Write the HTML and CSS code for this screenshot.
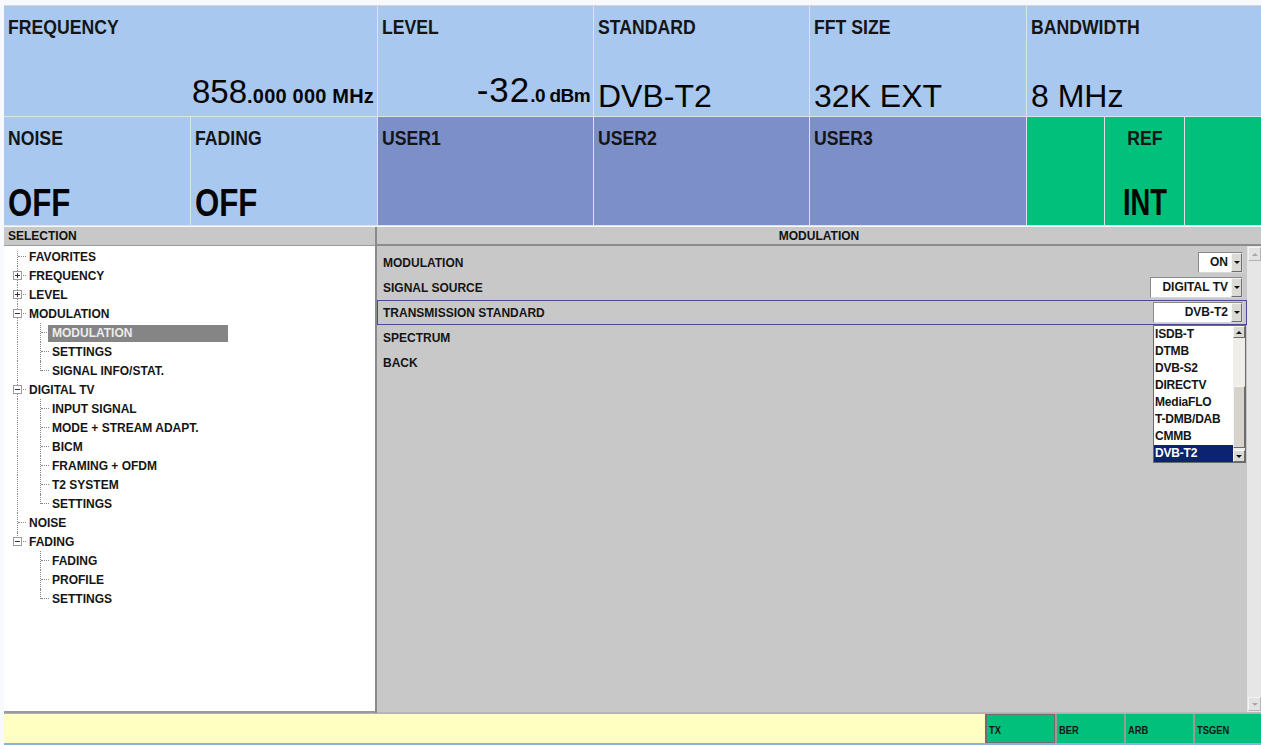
FILE: index.html
```html
<!DOCTYPE html>
<html lang="en">
<head>
<meta charset="utf-8">
<title>DVB-T2 Signal Generator</title>
<link rel="stylesheet" href="styles.css">
</head>
<body>
<div class="screen">

  <!-- status panel: two rows of parameter tiles -->
  <div class="status">
    <div class="tile blue span2">
      <span class="lbl">FREQUENCY</span>
      <span class="val right"><span class="num">858</span><span class="unit">.000 000 MHz</span></span>
    </div>
    <div class="tile blue">
      <span class="lbl">LEVEL</span>
      <span class="val right"><span class="num lvl">-32</span><span class="unit tight">.0 dBm</span></span>
    </div>
    <div class="tile blue">
      <span class="lbl">STANDARD</span>
      <span class="val">DVB-T2</span>
    </div>
    <div class="tile blue">
      <span class="lbl">FFT SIZE</span>
      <span class="val">32K EXT</span>
    </div>
    <div class="tile blue span3">
      <span class="lbl">BANDWIDTH</span>
      <span class="val">8 MHz</span>
    </div>

    <div class="tile blue">
      <span class="lbl">NOISE</span>
      <span class="val state">OFF</span>
    </div>
    <div class="tile blue">
      <span class="lbl">FADING</span>
      <span class="val state">OFF</span>
    </div>
    <div class="tile user"><span class="lbl">USER1</span></div>
    <div class="tile user"><span class="lbl">USER2</span></div>
    <div class="tile user"><span class="lbl">USER3</span></div>
    <div class="tile green"></div>
    <div class="tile green centered">
      <span class="lbl">REF</span>
      <span class="val state ref">INT</span>
    </div>
    <div class="tile green"></div>
  </div>

  <!-- working area: navigation tree and parameter menu -->
  <div class="work">
    <section class="selection">
      <div class="pane-head">SELECTION</div>
      <div class="tree">
        <div class="node"><span class="g tee first"></span><span class="txt">FAVORITES</span></div>
        <div class="node"><span class="g tee"><i class="box plus"></i></span><span class="txt">FREQUENCY</span></div>
        <div class="node"><span class="g tee"><i class="box plus"></i></span><span class="txt">LEVEL</span></div>
        <div class="node"><span class="g tee"><i class="box minus"></i></span><span class="txt">MODULATION</span></div>
        <div class="node"><span class="g pipe"></span><span class="g tee"></span><span class="txt selected">MODULATION</span></div>
        <div class="node"><span class="g pipe"></span><span class="g tee"></span><span class="txt">SETTINGS</span></div>
        <div class="node"><span class="g pipe"></span><span class="g end"></span><span class="txt">SIGNAL INFO/STAT.</span></div>
        <div class="node"><span class="g tee"><i class="box minus"></i></span><span class="txt">DIGITAL TV</span></div>
        <div class="node"><span class="g pipe"></span><span class="g tee"></span><span class="txt">INPUT SIGNAL</span></div>
        <div class="node"><span class="g pipe"></span><span class="g tee"></span><span class="txt">MODE + STREAM ADAPT.</span></div>
        <div class="node"><span class="g pipe"></span><span class="g tee"></span><span class="txt">BICM</span></div>
        <div class="node"><span class="g pipe"></span><span class="g tee"></span><span class="txt">FRAMING + OFDM</span></div>
        <div class="node"><span class="g pipe"></span><span class="g tee"></span><span class="txt">T2 SYSTEM</span></div>
        <div class="node"><span class="g pipe"></span><span class="g end"></span><span class="txt">SETTINGS</span></div>
        <div class="node"><span class="g tee"></span><span class="txt">NOISE</span></div>
        <div class="node"><span class="g end"><i class="box minus"></i></span><span class="txt">FADING</span></div>
        <div class="node"><span class="g"></span><span class="g tee"></span><span class="txt">FADING</span></div>
        <div class="node"><span class="g"></span><span class="g tee"></span><span class="txt">PROFILE</span></div>
        <div class="node"><span class="g"></span><span class="g end"></span><span class="txt">SETTINGS</span></div>
      </div>
    </section>

    <section class="menu">
      <div class="pane-head center">MODULATION</div>
      <div class="menu-body">
        <div class="rows">
          <div class="row">
            <span class="row-lbl">MODULATION</span>
            <span class="combo w-on"><span class="combo-txt">ON</span><span class="combo-btn"><i class="tri down"></i></span></span>
          </div>
          <div class="row">
            <span class="row-lbl">SIGNAL SOURCE</span>
            <span class="combo w-src"><span class="combo-txt">DIGITAL TV</span><span class="combo-btn"><i class="tri down"></i></span></span>
          </div>
          <div class="row focus">
            <span class="row-lbl">TRANSMISSION STANDARD</span>
            <span class="combo w-std open"><span class="combo-txt">DVB-T2</span><span class="combo-btn"><i class="tri down"></i></span>
              <span class="listbox">
                <span class="items">
                  <span class="item">ISDB-T</span>
                  <span class="item">DTMB</span>
                  <span class="item">DVB-S2</span>
                  <span class="item">DIRECTV</span>
                  <span class="item">MediaFLO</span>
                  <span class="item">T-DMB/DAB</span>
                  <span class="item">CMMB</span>
                  <span class="item current">DVB-T2</span>
                </span>
                <span class="lscroll">
                  <span class="sbtn"><i class="tri up"></i></span>
                  <span class="track"><span class="thumb"></span></span>
                  <span class="sbtn"><i class="tri down"></i></span>
                </span>
              </span>
            </span>
          </div>
          <div class="row"><span class="row-lbl">SPECTRUM</span></div>
          <div class="row"><span class="row-lbl">BACK</span></div>
        </div>
        <div class="vscroll">
          <span class="sbtn faint"><i class="tri up"></i></span>
          <span class="vtrack"></span>
          <span class="sbtn faint"><i class="tri down"></i></span>
        </div>
      </div>
    </section>
  </div>

  <!-- footer: message line and instrument mode tabs -->
  <div class="footer">
    <div class="msg"></div>
    <div class="tab active w-tx"><span class="tab-txt">TX</span></div>
    <div class="tab w-ber"><span class="tab-txt">BER</span></div>
    <div class="tab w-arb"><span class="tab-txt">ARB</span></div>
    <div class="tab w-tsgen"><span class="tab-txt">TSGEN</span></div>
  </div>
</div>
</body>
</html>
```

FILE: styles.css
```css
* { box-sizing: border-box; }

html, body {
  margin: 0;
  padding: 0;
  background: #ffffff;
}

body {
  font-family: "Liberation Sans", Arial, sans-serif;
  color: #111;
}

.screen {
  width: 1261px;
  height: 745px;
  padding: 5px 0 0 4px;
  display: flex;
  flex-direction: column;
  overflow: hidden;
  background: #f7f9fc;
}

/* ---------- status tiles ---------- */
.status {
  display: grid;
  grid-template-columns: 186px 186px 215px 215px 216px 77px 79px 1fr;
  grid-template-rows: 110px 108px;
  gap: 1px;
  background: #dfe2e8;
  border-top: 1px solid #d4d8de;
  border-bottom: 1px solid #dfe2e8;
}

.tile {
  display: flex;
  flex-direction: column;
  justify-content: space-between;
  align-items: flex-start;
  padding: 9px 4px 3px 4px;
  overflow: hidden;
}

.span2 { grid-column: span 2; }
.span3 { grid-column: span 3; }

.blue  { background: #a9c8f0; }
.user  { background: #7c8fc8; }
.green { background: #00c07c; }

/* condensed heading face: bold Sans squeezed horizontally */
.lbl {
  display: inline-block;
  font-weight: bold;
  font-size: 21px;
  line-height: 24px;
  color: #151515;
  transform: scaleX(0.84);
  transform-origin: left center;
  white-space: nowrap;
}

.val {
  font-size: 32px;
  line-height: 34px;
  color: #050505;
  white-space: nowrap;
}

.val.right {
  align-self: stretch;
  text-align: right;
  margin-right: -1px;
}

.num { font-size: 33px; }
.num.lvl { font-size: 35px; letter-spacing: 1px; }

.unit {
  font-size: 20px;
  font-weight: bold;
  letter-spacing: 0.2px;
}

.unit.tight {
  font-size: 19px;
  letter-spacing: -0.6px;
}

.val.state {
  display: inline-block;
  font-weight: bold;
  font-size: 38px;
  line-height: 38px;
  transform: scaleX(0.82);
  transform-origin: left center;
}

.centered { align-items: center; }
.centered .lbl,
.centered .val.state { transform-origin: center center; }
.val.state.ref { font-size: 36px; transform: scaleX(0.76); }

/* ---------- work area ---------- */
.work {
  display: grid;
  grid-template-columns: 373px 1fr;
  height: 486px;
  margin-top: 1px;
}

.pane-head {
  height: 19px;
  background: #c8c8c8;
  border-bottom: 1px solid #9a9a9a;
  font-size: 12px;
  font-weight: bold;
  line-height: 18px;
  padding-left: 4px;
  color: #111;
}

.pane-head.center {
  text-align: center;
  padding-left: 0;
  border-bottom: 2px solid #8c8c8c;
}

.selection {
  display: flex;
  flex-direction: column;
  border-right: 2px solid #8a8a8a;
}

.tree {
  flex: 1;
  background: #ffffff;
  padding: 1px 0 0 1px;
  border-bottom: 2px solid #9a9a9a;
}

.node {
  display: flex;
  align-items: center;
  height: 19px;
  font-size: 12px;
  font-weight: bold;
  color: #151515;
  white-space: nowrap;
}

.g {
  position: relative;
  flex: 0 0 23px;
  height: 19px;
}

.g.pipe::before,
.g.tee::before,
.g.end::before {
  content: "";
  position: absolute;
  left: 12px;
  top: 0;
  bottom: 0;
  border-left: 1px dotted #8a8a8a;
}

.g.first::before { top: 4px; }
.g.end::before { bottom: 9px; }

.g.tee::after,
.g.end::after {
  content: "";
  position: absolute;
  left: 13px;
  width: 8px;
  top: 9px;
  border-top: 1px dotted #8a8a8a;
}

.box {
  position: absolute;
  left: 8px;
  top: 5px;
  width: 9px;
  height: 9px;
  background: #ffffff;
  border: 1px solid #9c9c9c;
  z-index: 1;
}

.box::before {
  content: "";
  position: absolute;
  left: 1px;
  top: 3px;
  width: 5px;
  height: 1px;
  background: #333;
}

.box.plus::after {
  content: "";
  position: absolute;
  left: 3px;
  top: 1px;
  width: 1px;
  height: 5px;
  background: #333;
}

.txt { padding-left: 1px; }

.txt.selected {
  display: block;
  width: 180px;
  height: 17px;
  line-height: 17px;
  margin-top: 1px;
  margin-left: -3px;
  padding-left: 4px;
  background: #858585;
  color: #ececec;
}

/* ---------- menu ---------- */
.menu {
  display: flex;
  flex-direction: column;
}

.menu-body {
  flex: 1;
  display: flex;
  background: #c8c8c8;
  border-bottom: 1px solid #b8b8b8;
}

.rows {
  flex: 1;
  padding-top: 4px;
}

.row {
  position: relative;
  display: flex;
  align-items: center;
  justify-content: space-between;
  height: 25px;
  padding: 0 3px 0 5px;
  border: 1px solid transparent;
}

.row.focus { border-color: #4a4a98; }

.row-lbl {
  font-size: 12px;
  font-weight: bold;
  color: #151515;
}

.combo {
  position: relative;
  display: flex;
  height: 21px;
  background: #ffffff;
  border: 1px solid #8a8a8a;
  border-right-color: #d8d8d8;
  border-bottom-color: #d8d8d8;
}

.w-on  { width: 45px; }
.w-src { width: 93px; }
.w-std { width: 90px; }

.combo-txt {
  flex: 1;
  text-align: right;
  font-size: 12px;
  font-weight: bold;
  line-height: 19px;
  padding-right: 3px;
  color: #151515;
}

.combo-btn {
  flex: 0 0 11px;
  display: flex;
  align-items: center;
  justify-content: center;
  background: #dcdad4;
  border: 1px solid #f4f4f4;
  border-right-color: #6c6c6c;
  border-bottom-color: #6c6c6c;
}

.tri {
  display: block;
  width: 0;
  height: 0;
  border-left: 3px solid transparent;
  border-right: 3px solid transparent;
}

.tri.down { border-top: 3px solid #111; }
.tri.up   { border-bottom: 3px solid #111; }

.listbox {
  position: absolute;
  top: 22px;
  left: -1px;
  right: -4px;
  height: 138px;
  display: flex;
  background: #ffffff;
  border: 1px solid #6a6a6a;
  z-index: 2;
}

.items {
  flex: 1;
  display: flex;
  flex-direction: column;
}

.item {
  height: 17px;
  line-height: 17px;
  font-size: 12px;
  font-weight: bold;
  padding-left: 1px;
  color: #151515;
  letter-spacing: -0.2px;
}

.item.current {
  background: #0c2470;
  color: #ffffff;
}

.lscroll {
  flex: 0 0 12px;
  display: flex;
  flex-direction: column;
  background: #f0eeea;
}

.sbtn {
  flex: 0 0 12px;
  display: flex;
  align-items: center;
  justify-content: center;
  background: #dcdad4;
  border: 1px solid #f6f6f6;
  border-right-color: #6c6c6c;
  border-bottom-color: #6c6c6c;
}

.track {
  flex: 1;
  display: flex;
  flex-direction: column;
  justify-content: flex-end;
  padding-bottom: 2px;
}

.thumb {
  height: 62px;
  background: #d6d3cc;
  border: 1px solid #f6f6f6;
  border-right-color: #6c6c6c;
  border-bottom-color: #6c6c6c;
}

.vscroll {
  flex: 0 0 14px;
  display: flex;
  flex-direction: column;
  background: #e6e6e6;
  padding: 1px 0 1px 1px;
}

.vtrack { flex: 1; }

.sbtn.faint {
  flex: 0 0 14px;
  background: #e2e2e2;
  border-color: #f4f4f4 #b4b4b4 #b4b4b4 #f4f4f4;
}

.sbtn.faint .tri.up   { border-bottom-color: #a8a8a8; }
.sbtn.faint .tri.down { border-top-color: #a8a8a8; }

/* ---------- footer ---------- */
.footer {
  display: flex;
  height: 32px;
  border-top: 1px solid #b0b0b0;
  border-bottom: 2px solid #8eb0de;
}

.msg {
  flex: 1;
  background: #ffffc2;
}

.tab {
  background: #00c07c;
  border-left: 2px solid #9a9a9a;
  line-height: 29px;
  padding-left: 2px;
  color: #151515;
}

.tab-txt {
  display: inline-block;
  font-weight: bold;
  font-size: 11px;
  transform: scaleX(0.85);
  transform-origin: left center;
}

.tab.active { border: 1px solid #6e6e6e; border-left-width: 2px; line-height: 27px; }

.w-tx    { flex: 0 0 70px; }
.w-ber   { flex: 0 0 69px; }
.w-arb   { flex: 0 0 69px; }
.w-tsgen { flex: 0 0 68px; }
```
